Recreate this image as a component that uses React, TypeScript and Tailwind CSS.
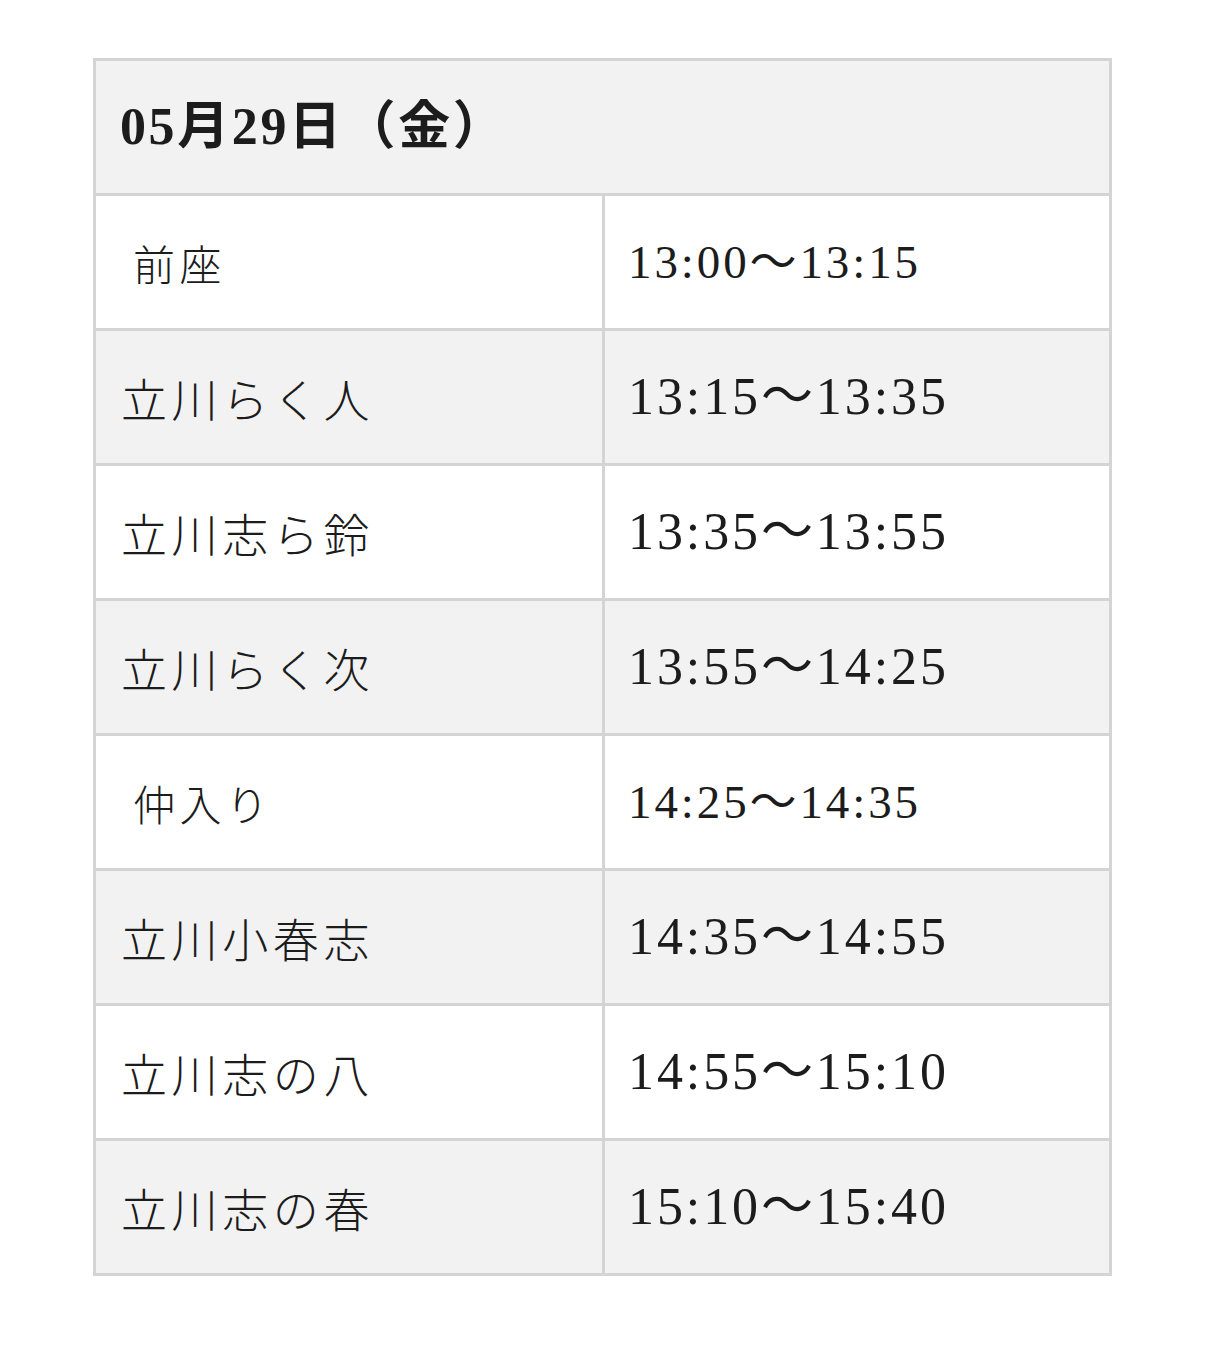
const rows = [
  { name: "前座", time: "13:00〜13:15", small: true },
  { name: "立川らく人", time: "13:15〜13:35" },
  { name: "立川志ら鈴", time: "13:35〜13:55" },
  { name: "立川らく次", time: "13:55〜14:25" },
  { name: "仲入り", time: "14:25〜14:35", small: true },
  { name: "立川小春志", time: "14:35〜14:55" },
  { name: "立川志の八", time: "14:55〜15:10" },
  { name: "立川志の春", time: "15:10〜15:40" },
];

const serif = "font-['Liberation_Serif','Noto_Sans_CJK_JP',serif]";

export default function App() {
  return (
    <div className="min-h-[1354px] bg-white pt-[58px]">
      <div className="ml-[93px] w-[1019px] border-[3px] border-[#d4d4d4] text-[#1c1c1c]">
        <div
          className={`flex h-[135px] items-center border-b-[3px] border-[#d4d4d4] bg-[#f2f2f2] pl-[24px] text-[52px] font-bold tracking-[0.05em] ${serif}`}
        >
          05月29日（金）
        </div>
        {rows.map((r, i) => {
          const last = i === rows.length - 1;
          return (
            <div
              key={r.name}
              className={`flex ${i % 2 === 1 ? "bg-[#f2f2f2]" : "bg-white"} ${
                last ? "h-[132px]" : "h-[135px] border-b-[3px] border-[#d4d4d4]"
              }`}
            >
              <div
                className={`flex w-[509px] items-center border-r-[3px] border-[#d4d4d4] font-['Noto_Sans_CJK_JP',sans-serif] font-light ${
                  r.small
                    ? "pl-[37px] text-[42px] tracking-[4.5px]"
                    : "pl-[25px] text-[46px] tracking-[4.6px]"
                }`}
              >
                {r.name}
              </div>
              <div
                className={`flex flex-1 items-center pl-[23px] ${serif} ${
                  r.small ? "text-[47px] tracking-[2.9px]" : "text-[52px] tracking-[2.9px]"
                }`}
              >
                {r.time}
              </div>
            </div>
          );
        })}
      </div>
    </div>
  );
}
